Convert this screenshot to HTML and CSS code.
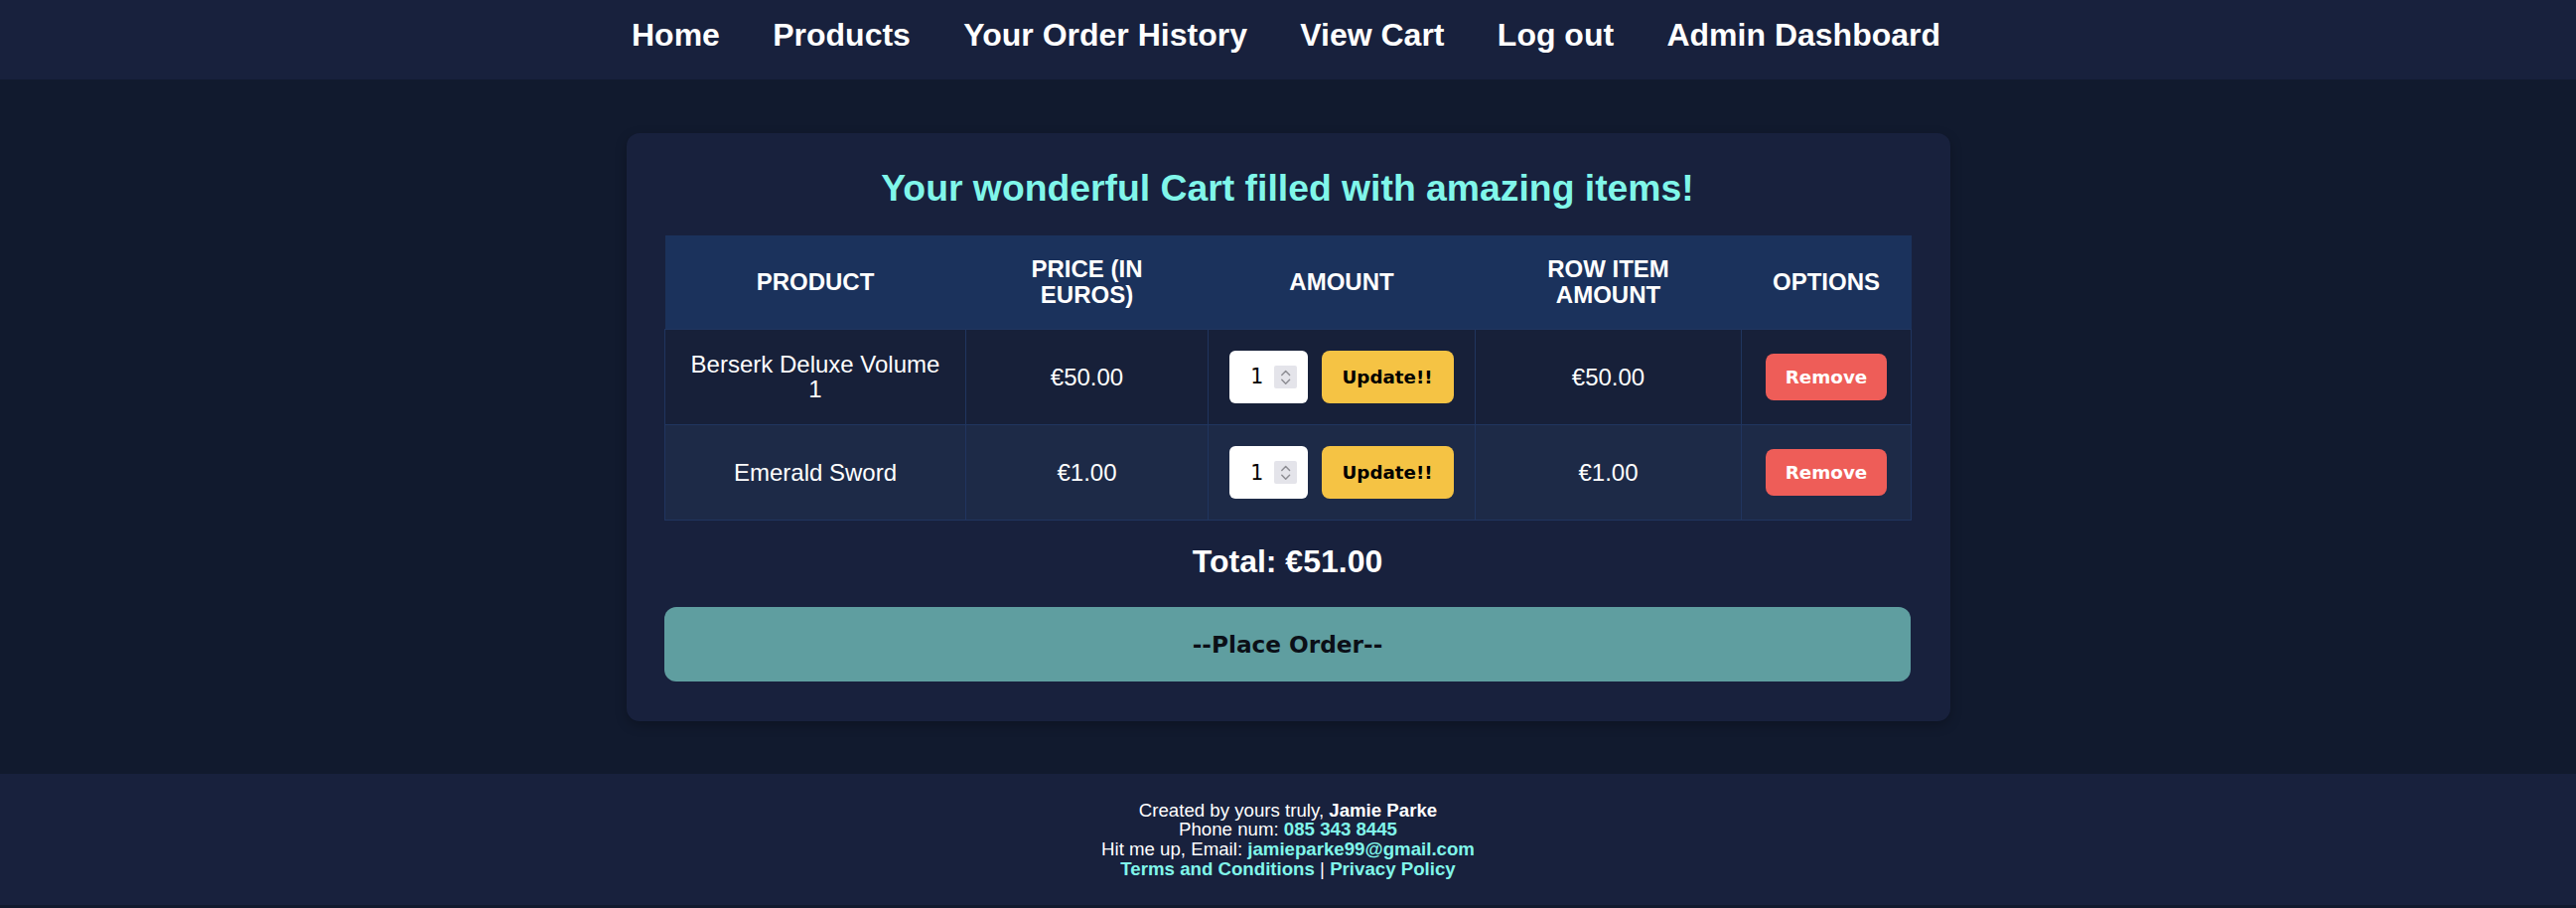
FILE: index.html
```html
<!DOCTYPE html>
<html lang="en">
<head>
<meta charset="utf-8">
<title>Cart</title>
<link rel="stylesheet" href="styles.css">
</head>
<body>
<nav class="topnav">
  <a class="nav-link" href="#">Home</a>
  <a class="nav-link" href="#">Products</a>
  <a class="nav-link" href="#">Your Order History</a>
  <a class="nav-link" href="#">View Cart</a>
  <a class="nav-link" href="#">Log out</a>
  <a class="nav-link" href="#">Admin Dashboard</a>
</nav>

<main class="page">
  <section class="card">
    <h1 class="card-title">Your wonderful Cart filled with amazing items!</h1>
    <table class="cart">
      <colgroup>
        <col class="c1"><col class="c2"><col class="c3"><col class="c4"><col class="c5">
      </colgroup>
      <thead>
        <tr>
          <th>Product</th>
          <th>Price (in euros)</th>
          <th>Amount</th>
          <th>Row item amount</th>
          <th>Options</th>
        </tr>
      </thead>
      <tbody>
        <tr>
          <td>Berserk Deluxe Volume 1</td>
          <td>€50.00</td>
          <td>
            <form class="amount-form">
              <span class="qty">
                <input class="qty-input" type="number" value="1">
                <span class="spin"><svg viewBox="0 0 24 24" width="24" height="24"><polyline points="8,9.5 12,5.5 16,9.5"/><polyline points="8,14.5 12,18.5 16,14.5"/></svg></span>
              </span>
              <button class="btn-update" type="button">Update!!</button>
            </form>
          </td>
          <td>€50.00</td>
          <td><button class="btn-remove" type="button">Remove</button></td>
        </tr>
        <tr>
          <td>Emerald Sword</td>
          <td>€1.00</td>
          <td>
            <form class="amount-form">
              <span class="qty">
                <input class="qty-input" type="number" value="1">
                <span class="spin"><svg viewBox="0 0 24 24" width="24" height="24"><polyline points="8,9.5 12,5.5 16,9.5"/><polyline points="8,14.5 12,18.5 16,14.5"/></svg></span>
              </span>
              <button class="btn-update" type="button">Update!!</button>
            </form>
          </td>
          <td>€1.00</td>
          <td><button class="btn-remove" type="button">Remove</button></td>
        </tr>
      </tbody>
    </table>
    <h2 class="total">Total: €51.00</h2>
    <button class="btn-order" type="button">--Place Order--</button>
  </section>
</main>

<footer class="footer">
  <div class="f-line">Created by yours truly, <strong>Jamie Parke</strong></div>
  <div class="f-line">Phone num: <a class="f-link" href="#">085 343 8445</a></div>
  <div class="f-line">Hit me up, Email: <a class="f-link" href="#">jamieparke99@gmail.com</a></div>
  <div class="f-line"><a class="f-link" href="#">Terms and Conditions</a> | <a class="f-link" href="#">Privacy Policy</a></div>
</footer>
</body>
</html>
```

FILE: styles.css
```css
* { box-sizing: border-box; }

html, body {
  margin: 0;
  padding: 0;
}

body {
  background: #111a2e;
  color: #ffffff;
  font-family: "Liberation Sans", Arial, Helvetica, sans-serif;
}

.topnav {
  height: 80px;
  background: #18213d;
  display: flex;
  justify-content: center;
  align-items: flex-start;
  gap: 53.33px;
  padding-top: 18px;
  padding-right: 4px;
}

.nav-link {
  color: #ffffff;
  text-decoration: none;
  font-weight: bold;
  font-size: 32px;
  line-height: 34px;
}

.page {
  padding: 54px 0 53.33px;
}

.card {
  width: 1333px;
  margin: 0 auto;
  padding: 35px 39.5px 40px 38.5px;
  background: #18213d;
  border-radius: 13px;
  box-shadow: 0 4px 12px rgba(0, 0, 0, 0.25);
}

.card-title {
  margin: 0 0 28px;
  text-align: center;
  color: #80f6ea;
  font-size: 37.33px;
  line-height: 40px;
  font-weight: bold;
}

.cart {
  width: 100%;
  border-collapse: collapse;
  table-layout: fixed;
}

.c1 { width: 303px; }
.c2 { width: 244px; }
.c3 { width: 269px; }
.c4 { width: 268px; }
.c5 { width: 171px; }

.cart th {
  background: #1b325c;
  color: #ffffff;
  font-size: 24px;
  line-height: 25.6px;
  font-weight: bold;
  text-transform: uppercase;
  padding: 21.33px;
  text-align: center;
  vertical-align: middle;
}

.cart td {
  font-size: 24px;
  line-height: 25.6px;
  padding: 21.33px;
  text-align: center;
  vertical-align: middle;
  border: 1px solid #20355f;
}

.cart tbody tr:nth-child(odd) td { background: #172039; }
.cart tbody tr:nth-child(even) td { background: #1d2a47; }

.amount-form {
  margin: 0;
  display: flex;
  justify-content: center;
  align-items: stretch;
  gap: 13.33px;
}

.qty {
  width: 79.33px;
  height: 52.5px;
  background: #ffffff;
  border-radius: 6px;
  display: flex;
  align-items: center;
  padding: 0 11px 0 10.67px;
}

.qty-input {
  flex: 1;
  width: 0;
  min-width: 0;
  border: none;
  outline: none;
  background: transparent;
  padding: 0;
  margin: 0;
  text-align: center;
  font-family: "DejaVu Sans", sans-serif;
  font-size: 20.5px;
  color: #000000;
  -moz-appearance: textfield;
  appearance: textfield;
}

.qty-input::-webkit-inner-spin-button,
.qty-input::-webkit-outer-spin-button {
  -webkit-appearance: none;
  margin: 0;
}

.spin {
  width: 23.4px;
  height: 23.7px;
  background: #e4e4ea;
  border-radius: 2px;
  display: flex;
  align-items: center;
  justify-content: center;
}

.spin svg {
  width: 23.4px;
  height: 23.7px;
  fill: none;
  stroke: #8d8d93;
  stroke-width: 1.5;
  stroke-linecap: round;
  stroke-linejoin: round;
}

.btn-update {
  background: #f5c344;
  color: #000000;
  border: none;
  border-radius: 8px;
  padding: 0 21px;
  font-family: "DejaVu Sans", sans-serif;
  font-weight: bold;
  font-size: 18.3px;
  cursor: pointer;
}

.btn-remove {
  background: #ee5d58;
  color: #ffffff;
  border: none;
  border-radius: 8px;
  padding: 10.67px 20px;
  font-family: "DejaVu Sans", sans-serif;
  font-weight: bold;
  font-size: 18.3px;
  line-height: 25.7px;
  cursor: pointer;
}

.total {
  margin: 24px 0 28.7px;
  text-align: center;
  font-size: 32px;
  line-height: 34px;
  font-weight: bold;
}

.btn-order {
  display: block;
  width: 100%;
  height: 74.7px;
  background: #5f9ea0;
  color: #0b0f17;
  border: none;
  border-radius: 12px;
  font-family: "DejaVu Sans", sans-serif;
  font-weight: bold;
  font-size: 23.2px;
  cursor: pointer;
}

.footer {
  background: #18213d;
  padding: 26.67px 0;
  text-align: center;
  font-size: 18.67px;
  line-height: 19.8px;
}

.footer strong { font-weight: bold; color: #ffffff; }

.f-link {
  color: #80f6ea;
  font-weight: bold;
  text-decoration: none;
}
```
